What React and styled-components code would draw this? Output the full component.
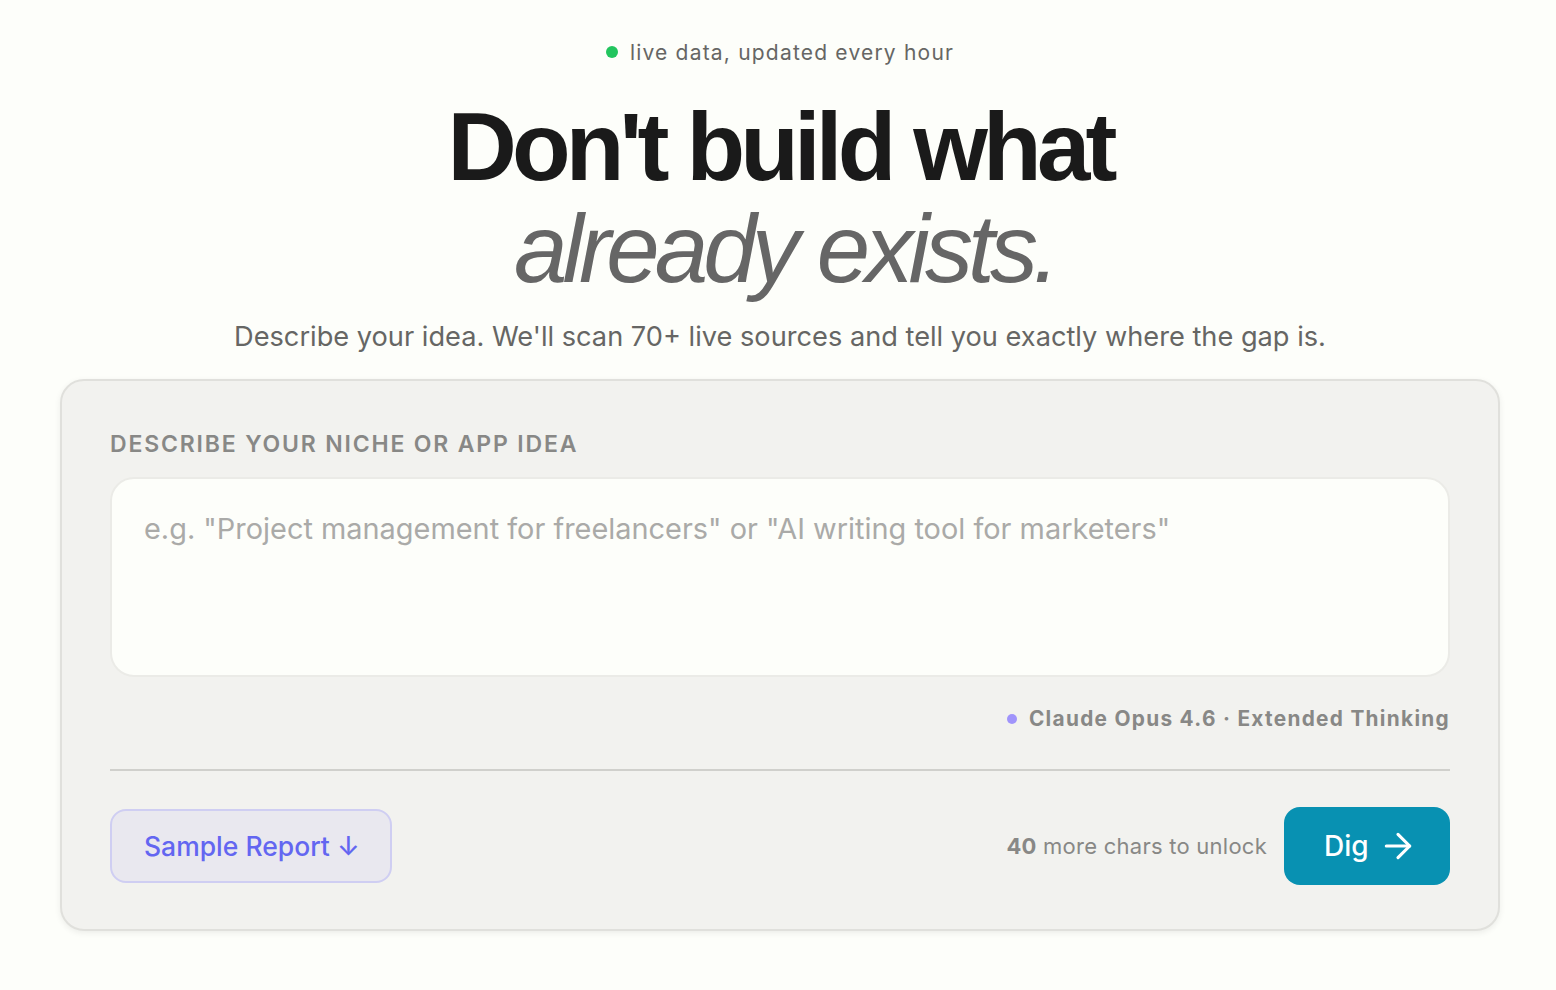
import styled, { createGlobalStyle } from 'styled-components'
import { ArrowRight } from 'lucide-react'

const GlobalStyle = createGlobalStyle`
  html, body {
    margin: 0;
    padding: 0;
    background: #fdfefa;
    font-family: Inter, "Liberation Sans", sans-serif;
    -webkit-font-smoothing: antialiased;
  }
  * { box-sizing: border-box; }
`
const Page = styled.div`
  width: 100%;
  min-height: 990px;
  padding: 39px 56px 0 60px;
  display: flex;
  flex-direction: column;
  align-items: center;
`
const LiveBadge = styled.div`
  display: flex;
  align-items: center;
  gap: 12px;
  height: 26px;
  font-size: 21px;
  letter-spacing: 1.2px;
  color: #666664;
`
const Dot = styled.span`
  width: ${p => p.$size}px;
  height: ${p => p.$size}px;
  border-radius: 50%;
  background: ${p => p.$color};
  flex: none;
`
const Headline = styled.h1`
  margin: 31px 0 0;
  font-family: "Liberation Sans", Arial, sans-serif;
  font-size: 96px;
  line-height: 102px;
  font-weight: 700;
  letter-spacing: -4.85px;
  color: #1a1a1a;
  text-align: center;
`
const HeadlineAccent = styled.em`
  display: block;
  margin-left: 9px;
  font-weight: 400;
  font-style: italic;
  color: #666666;
`
const Subtitle = styled.p`
  margin: 20px 0 0;
  font-size: 27.2px;
  line-height: 34px;
  color: #666664;
  text-align: center;
`
const Card = styled.section`
  width: 1440px;
  margin-top: 25px;
  padding: 49px 48px 44px;
  background: #f2f2ef;
  border: 2px solid #e0e0dc;
  border-radius: 24px;
  box-shadow: 0 2px 6px rgba(0, 0, 0, 0.07);
`
const FieldLabel = styled.label`
  display: block;
  font-size: 23px;
  line-height: 28px;
  font-weight: 600;
  letter-spacing: 1.83px;
  color: #888886;
`
const IdeaInput = styled.textarea`
  display: block;
  width: 100%;
  height: 200px;
  margin-top: 19px;
  padding: 31px 32px;
  resize: none;
  outline: none;
  background: #fdfefa;
  border: 2px solid #ebebe7;
  border-radius: 24px;
  font-family: inherit;
  font-size: 28.92px;
  line-height: 38px;
  color: #1a1a1a;
  &::placeholder {
    color: #aaaaa8;
    opacity: 1;
  }
`
const ModelRow = styled.div`
  display: flex;
  justify-content: flex-end;
  align-items: center;
  gap: 12px;
  margin-top: 28px;
  font-size: 20.8px;
  line-height: 28px;
  font-weight: 650;
  letter-spacing: 1.3px;
  color: #888886;
`
const Divider = styled.hr`
  margin: 36px 0 0;
  height: 2px;
  border: 0;
  background: #d0d0cc;
`
const Footer = styled.div`
  display: flex;
  justify-content: space-between;
  align-items: center;
  margin-top: 36px;
`
const SampleButton = styled.button`
  width: 282px;
  height: 74px;
  padding: 0 32px;
  background: #e9e8ef;
  border: 2px solid #cfcef2;
  border-radius: 16px;
  font-family: inherit;
  font-size: 26.5px;
  font-weight: 550;
  text-align: left;
  white-space: nowrap;
  color: #6366f1;
`
const Actions = styled.div`
  display: flex;
  align-items: center;
  gap: 17px;
`
const CharHint = styled.span`
  font-size: 22px;
  letter-spacing: 0.25px;
  color: #888886;
`
const CharCount = styled.strong`
  font-weight: 700;
`
const DigButton = styled.button`
  display: flex;
  align-items: center;
  gap: 9px;
  width: 166px;
  height: 78px;
  padding: 0 0 0 40px;
  background: #0891b2;
  border: 0;
  border-radius: 16px;
  font-family: inherit;
  font-size: 28px;
  font-weight: 500;
  color: #ffffff;
`

export default function App() {
  return (
    <>
      <GlobalStyle />
      <Page>
        <LiveBadge>
          <Dot $size={12} $color="#22c55e" />
          live data, updated every hour
        </LiveBadge>
        <Headline>
          Don't build what
          <HeadlineAccent>already exists.</HeadlineAccent>
        </Headline>
        <Subtitle>Describe your idea. We'll scan 70+ live sources and tell you exactly where the gap is.</Subtitle>
        <Card>
          <FieldLabel>DESCRIBE YOUR NICHE OR APP IDEA</FieldLabel>
          <IdeaInput placeholder={'e.g. "Project management for freelancers" or "AI writing tool for marketers"'} />
          <ModelRow>
            <Dot $size={10} $color="#a094fb" />
            Claude Opus 4.6 · Extended Thinking
          </ModelRow>
          <Divider />
          <Footer>
            <SampleButton>Sample Report ↓</SampleButton>
            <Actions>
              <CharHint><CharCount>40</CharCount> more chars to unlock</CharHint>
              <DigButton>
                Dig
                <ArrowRight size={40} strokeWidth={1.9} />
              </DigButton>
            </Actions>
          </Footer>
        </Card>
      </Page>
    </>
  )
}
